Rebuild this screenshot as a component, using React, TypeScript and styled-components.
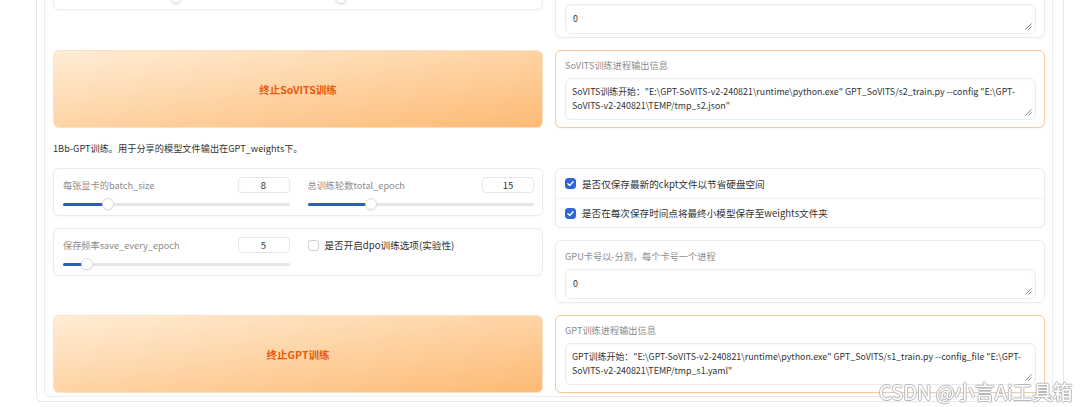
import React from 'react';
import styled, { createGlobalStyle } from 'styled-components';

const GlobalStyles = createGlobalStyle`
  html, body {
    margin: 0;
    padding: 0;
    background: #fff;
  }
  body {
    font-family: "Noto Sans CJK SC", "Noto Sans", sans-serif;
    color: #333;
    overflow: hidden;
  }
  * { box-sizing: border-box; }
`;

const Frame = styled.div`
  margin: -17px 16px 0 36px;
  border: 1px solid #e8e8e8;
  border-top: none;
  border-radius: 0 0 6px 6px;
  padding: 0 10px 4px 7px;
`;

const Panel = styled.div`
  border: 1px solid #ececec;
  border-top: none;
  border-radius: 0 0 6px 6px;
  padding: 0 7px 3px 8px;
  display: flex;
  flex-direction: column;
  gap: 12px;
`;

const Row = styled.div<{ $align?: string }>`
  display: grid;
  grid-template-columns: minmax(0, 1fr) minmax(0, 1fr);
  column-gap: 12px;
  align-items: ${(p) => p.$align || 'stretch'};
`;

const Stack = styled.div<{ $lead?: number }>`
  display: flex;
  flex-direction: column;
  gap: 12px;
  min-width: 0;
  padding-top: ${(p) => p.$lead || 0}px;
`;

const Card = styled.div`
  background: #fff;
  border: 1px solid #ebebeb;
  border-radius: 6px;
  box-shadow: 0 1px 2px rgba(0, 0, 0, 0.03);
  min-width: 0;
`;

const SliderCard = styled(Card)`
  display: grid;
  grid-template-columns: minmax(0, 1fr) minmax(0, 1fr);
  column-gap: 18px;
  padding: 8px 8px 5px 9px;
`;

const SliderCol = styled.div`
  display: flex;
  flex-direction: column;
  gap: 5px;
`;

const Head = styled.div`
  display: flex;
  align-items: center;
  justify-content: space-between;
  height: 16px;
`;

const Label = styled.span`
  font-size: 9.2px;
  line-height: 14px;
  color: #8c8c8c;
  white-space: nowrap;
`;

const NumberBox = styled.div`
  width: 52px;
  height: 16px;
  border: 1px solid #e6e6e6;
  border-radius: 4px;
  font-size: 9.5px;
  line-height: 14px;
  text-align: center;
  color: #333;
`;

const SliderBox = styled.div`
  position: relative;
  height: 12px;
  display: flex;
  align-items: center;
`;

const Rail = styled.div`
  flex: 1;
  height: 3px;
  background: #e6e6e6;
  border-radius: 2px;
`;

const Fill = styled.div`
  height: 100%;
  background: #2d5cc0;
  border-radius: 2px;
`;

const Thumb = styled.div`
  position: absolute;
  top: 50%;
  width: 12px;
  height: 12px;
  border-radius: 50%;
  background: #fff;
  border: 1px solid #dcdcdc;
  box-shadow: 0 1px 2px rgba(0, 0, 0, 0.08);
  transform: translate(-50%, -50%);
`;

const CheckLine = styled.label`
  display: flex;
  align-items: center;
  gap: 6px;
  font-size: 9.6px;
  color: #333;
  white-space: nowrap;
`;

const Box = styled.span<{ $on?: boolean }>`
  width: 11px;
  height: 11px;
  border-radius: 3px;
  flex: none;
  display: flex;
  align-items: center;
  justify-content: center;
  background: ${(p) => (p.$on ? '#2f66d8' : '#fff')};
  border: 1px solid ${(p) => (p.$on ? '#2f66d8' : '#cfcfcf')};
`;

const CheckCard = styled(Card)`
  display: flex;
  flex-direction: column;
`;

const CheckItem = styled.div`
  height: 29px;
  display: flex;
  align-items: center;
  padding: 0 9px;
  & + & {
    border-top: 1px solid #efefef;
  }
`;

const TextCard = styled(Card)`
  display: flex;
  flex-direction: column;
  gap: 6px;
  padding: 8px 8px 3px 9px;
`;

const OutputCard = styled(TextCard)`
  border-color: #f7c89c;
  padding: 7px 8px 7px 9px;
`;

const TextBox = styled.div<{ $lines?: number }>`
  position: relative;
  border: 1px solid #ececec;
  border-radius: 6px;
  background: #fff;
  box-shadow: inset 0 1px 2px rgba(0, 0, 0, 0.03);
  padding: ${(p) => ((p.$lines || 1) > 1 ? '6px 6px' : '7px 7px')};
  min-height: ${(p) => ((p.$lines || 1) > 1 ? 42 : 30)}px;
  font-size: 8.9px;
  line-height: 14px;
  color: #333;
  overflow: hidden;
`;

const Line = styled.div`
  white-space: nowrap;
`;

const Grip = styled.svg`
  position: absolute;
  right: 3px;
  bottom: 3px;
`;

const StopButton = styled.button`
  min-height: 78px;
  border: 1px solid #fde0c2;
  border-radius: 6px;
  background: linear-gradient(to bottom right, #ffedd5, #fdba74);
  color: #ea580c;
  font-family: inherit;
  font-size: 10.5px;
  font-weight: 700;
  cursor: pointer;
`;

const Note = styled.div`
  font-size: 9.2px;
  line-height: 16px;
  color: #333;
`;

const Watermark = styled.div`
  position: fixed;
  left: 879px;
  top: 380px;
  font-size: 20px;
  line-height: 24px;
  color: #fff;
  text-shadow: 1px 0 #b9b9b9, -1px 0 #b9b9b9, 0 1px #b9b9b9, 0 -1px #b9b9b9;
  white-space: nowrap;
  pointer-events: none;
`;

type SliderProps = { label?: string; value?: string; pct: number };

function Slider({ label, value, pct }: SliderProps) {
  return (
    <SliderCol>
      {label ? (
        <Head>
          <Label>{label}</Label>
          <NumberBox>{value}</NumberBox>
        </Head>
      ) : null}
      <SliderBox>
        <Rail>
          <Fill style={{ width: `${pct}%` }} />
        </Rail>
        <Thumb style={{ left: `${pct}%` }} />
      </SliderBox>
    </SliderCol>
  );
}

function Check({ on, text }: { on?: boolean; text: string }) {
  return (
    <CheckLine>
      <Box $on={on}>
        {on ? (
          <svg width="9" height="9" viewBox="0 0 12 12">
            <polyline points="2.5,6.2 5,8.6 9.5,3.6" fill="none" stroke="#fff" strokeWidth="1.8" strokeLinecap="round" strokeLinejoin="round" />
          </svg>
        ) : null}
      </Box>
      {text}
    </CheckLine>
  );
}

function ResizeGrip() {
  return (
    <Grip width="7" height="7" viewBox="0 0 7 7">
      <line x1="6.5" y1="0.5" x2="0.5" y2="6.5" stroke="#777" strokeWidth="0.9" />
      <line x1="6.5" y1="3.5" x2="3.5" y2="6.5" stroke="#777" strokeWidth="0.9" />
    </Grip>
  );
}

function Output({ label, lines }: { label: string; lines: string[] }) {
  return (
    <OutputCard>
      <Label>{label}</Label>
      <TextBox $lines={lines.length}>
        {lines.map((l, i) => (
          <Line key={i}>{l}</Line>
        ))}
        <ResizeGrip />
      </TextBox>
    </OutputCard>
  );
}

function GpuBox({ label }: { label?: string }) {
  return (
    <TextCard>
      {label ? <Label>{label}</Label> : null}
      <TextBox>
        0
        <ResizeGrip />
      </TextBox>
    </TextCard>
  );
}

export default function App() {
  return (
    <>
      <GlobalStyles />
      <Frame>
        <Panel>
          {/* top of the SoVITS block, scrolled mostly out of view */}
          <Row $align="start">
            <SliderCard>
              <Slider pct={50} />
              <Slider pct={15} />
            </SliderCard>
            <Stack $lead={12}>
              <GpuBox />
            </Stack>
          </Row>

          <Row>
            <StopButton>终止SoVITS训练</StopButton>
            <Output
              label="SoVITS训练进程输出信息"
              lines={[
                'SoVITS训练开始："E:\\GPT-SoVITS-v2-240821\\runtime\\python.exe" GPT_SoVITS/s2_train.py --config "E:\\GPT-',
                'SoVITS-v2-240821\\TEMP/tmp_s2.json"',
              ]}
            />
          </Row>

          <Note>1Bb-GPT训练。用于分享的模型文件输出在GPT_weights下。</Note>

          <Row $align="start">
            <Stack>
              <SliderCard>
                <Slider label="每张显卡的batch_size" value="8" pct={20} />
                <Slider label="总训练轮数total_epoch" value="15" pct={28} />
              </SliderCard>
              <SliderCard>
                <Slider label="保存频率save_every_epoch" value="5" pct={10.5} />
                <SliderCol>
                  <Head>
                    <Check text="是否开启dpo训练选项(实验性)" />
                  </Head>
                </SliderCol>
              </SliderCard>
            </Stack>
            <Stack>
              <CheckCard>
                <CheckItem>
                  <Check on text="是否仅保存最新的ckpt文件以节省硬盘空间" />
                </CheckItem>
                <CheckItem>
                  <Check on text="是否在每次保存时间点将最终小模型保存至weights文件夹" />
                </CheckItem>
              </CheckCard>
              <GpuBox label="GPU卡号以-分割，每个卡号一个进程" />
            </Stack>
          </Row>

          <Row>
            <StopButton>终止GPT训练</StopButton>
            <Output
              label="GPT训练进程输出信息"
              lines={[
                'GPT训练开始："E:\\GPT-SoVITS-v2-240821\\runtime\\python.exe" GPT_SoVITS/s1_train.py --config_file "E:\\GPT-',
                'SoVITS-v2-240821\\TEMP/tmp_s1.yaml"',
              ]}
            />
          </Row>
        </Panel>
      </Frame>
      <Watermark>CSDN @小言Ai工具箱</Watermark>
    </>
  );
}
